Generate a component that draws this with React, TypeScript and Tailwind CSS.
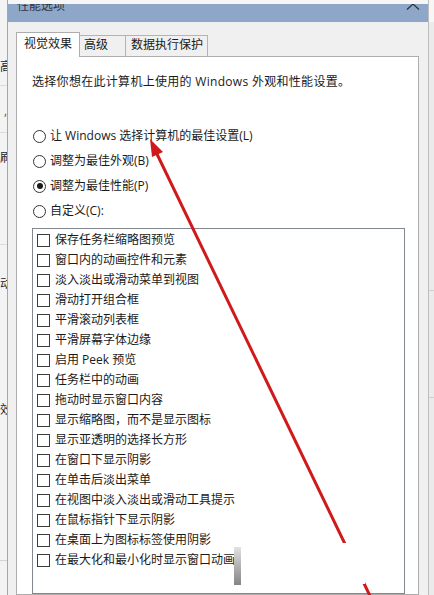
const effects = [
  '保存任务栏缩略图预览',
  '窗口内的动画控件和元素',
  '淡入淡出或滑动菜单到视图',
  '滑动打开组合框',
  '平滑滚动列表框',
  '平滑屏幕字体边缘',
  '启用 Peek 预览',
  '任务栏中的动画',
  '拖动时显示窗口内容',
  '显示缩略图，而不是显示图标',
  '显示亚透明的选择长方形',
  '在窗口下显示阴影',
  '在单击后淡出菜单',
  '在视图中淡入淡出或滑动工具提示',
  '在鼠标指针下显示阴影',
  '在桌面上为图标标签使用阴影',
  '在最大化和最小化时显示窗口动画',
];

const options = [
  { label: '让 Windows 选择计算机的最佳设置(L)', checked: false },
  { label: '调整为最佳外观(B)', checked: false },
  { label: '调整为最佳性能(P)', checked: true },
  { label: '自定义(C):', checked: false },
];

function Radio({ checked }: { checked: boolean }) {
  return (
    <span className="w-[13px] h-[13px] rounded-full border border-[#333] bg-white flex items-center justify-center shrink-0">
      {checked && <span className="w-[6px] h-[6px] rounded-full bg-[#1a1a1a]" />}
    </span>
  );
}

export default function App() {
  return (
    <div className="relative w-[434px] h-[595px] overflow-hidden flex bg-[#f0f0f0] text-[12px] text-[#1a1a1a] font-['Open_Sans','Noto_Sans_CJK_SC',sans-serif]">
      {/* background window, left edge */}
      <div className="w-[8px] shrink-0 bg-[#f3f3f3] border-r border-[#a6a6a6] flex flex-col items-end overflow-hidden text-[#222]">
        <span className="mt-[60px] leading-[14px] mr-[-5px]">高</span>
        <div className="mt-[11px] w-full h-px bg-[#dcdcdc]" />
        <span className="mt-[20px] leading-[10px] text-[#555]">,</span>
        <div className="mt-[16px] w-full h-px bg-[#dcdcdc]" />
        <span className="mt-[19px] leading-[12px] mr-[-5px]">刷</span>
        <div className="mt-[80px] w-full h-px bg-[#dcdcdc]" />
        <span className="mt-[32px] leading-[14px] mr-[-5px]">动</span>
        <span className="mt-[112px] leading-[14px] mr-[-5px]">效</span>
        <div className="mt-[143px] w-full h-px bg-[#d4d4d4]" />
      </div>

      {/* dialog */}
      <div className="w-[420px] shrink-0 flex flex-col">
        <div className="h-[4px] bg-[#f6f6f6]" />
        <div className="h-[18px] bg-[#8ea7c9] flex justify-between items-start overflow-hidden">
          <span className="ml-[9px] mt-[-5px] leading-[14px] text-[#30343a]">性能选项</span>
          <svg width="14" height="7" viewBox="0 0 14 7" className="mr-[8px] mt-[-1px]">
            <path d="M1 6.5 L7 1 L13 6.5" fill="none" stroke="#2a2f38" strokeWidth="1.2" />
          </svg>
        </div>

        <div className="flex-1 pl-[8px] pr-[9px] pt-[10px] flex flex-col">
          {/* tabs */}
          <div className="flex items-end h-[24px]">
            <div className="relative z-10 w-[64px] h-[25px] -mb-px bg-white border-l border-t border-r border-[#adadad] pl-[7px] pt-[3px] leading-[16px]">
              视觉效果
            </div>
            <div className="w-[46px] h-[21px] bg-[#f0f0f0] border-t border-r border-[#b4b4b4] pl-[4px] pt-[1px] leading-[16px]">
              高级
            </div>
            <div className="w-[82px] h-[21px] bg-[#f0f0f0] border-t border-r border-[#b4b4b4] pl-[5px] pt-[1px] leading-[16px]">
              数据执行保护
            </div>
          </div>

          {/* panel */}
          <div className="flex-1 bg-white border border-[#adadad] pl-[15px] pr-[13px] pt-[17px] flex flex-col">
            <p className="leading-[16px] tracking-[0.3px]">选择你想在此计算机上使用的 Windows 外观和性能设置。</p>

            <div className="mt-[36px] flex flex-col gap-[5px]">
              {options.map((o) => (
                <div key={o.label} className="h-[20px] flex items-center gap-[4px] pl-px">
                  <Radio checked={o.checked} />
                  <span className="leading-[16px]">{o.label}</span>
                </div>
              ))}
            </div>

            <div className="mt-[7px] flex-1 border border-[#828790] pt-px pl-[4px]">
              {effects.map((e) => (
                <div key={e} className="h-[20px] flex items-center gap-[5px]">
                  <span className="w-[13px] h-[13px] border border-[#3c3c3c] bg-white shrink-0" />
                  <span className="leading-[16px] whitespace-nowrap">{e}</span>
                </div>
              ))}
            </div>
          </div>
        </div>
      </div>

      {/* background window, right edge */}
      <div className="flex-1 bg-[#ebebeb] border-l border-[#bdbdbd] flex flex-col">
        <div className="h-[22px] bg-[#f6f6f6]" />
        <div className="mt-[268px] h-px bg-[#d0d0d0]" />
        <div className="mt-[106px] h-px bg-[#d0d0d0]" />
      </div>

      {/* watermark patch */}
      <div className="absolute left-[234px] top-[547px] w-[7px] h-[38px] bg-linear-to-b from-[#e2e2e2] to-[#858585]" />

      {/* red annotation arrow */}
      <svg className="absolute inset-0 pointer-events-none" width="434" height="595" viewBox="0 0 434 595">
        <line x1="156" y1="152" x2="372" y2="600" stroke="#d0191b" strokeWidth="3" />
        <polygon points="150,139 163,152 152,157" fill="#d0191b" />
      </svg>
      <div className="absolute left-[241px] top-[543px] w-[124px] h-[41px] bg-white" />
    </div>
  );
}
